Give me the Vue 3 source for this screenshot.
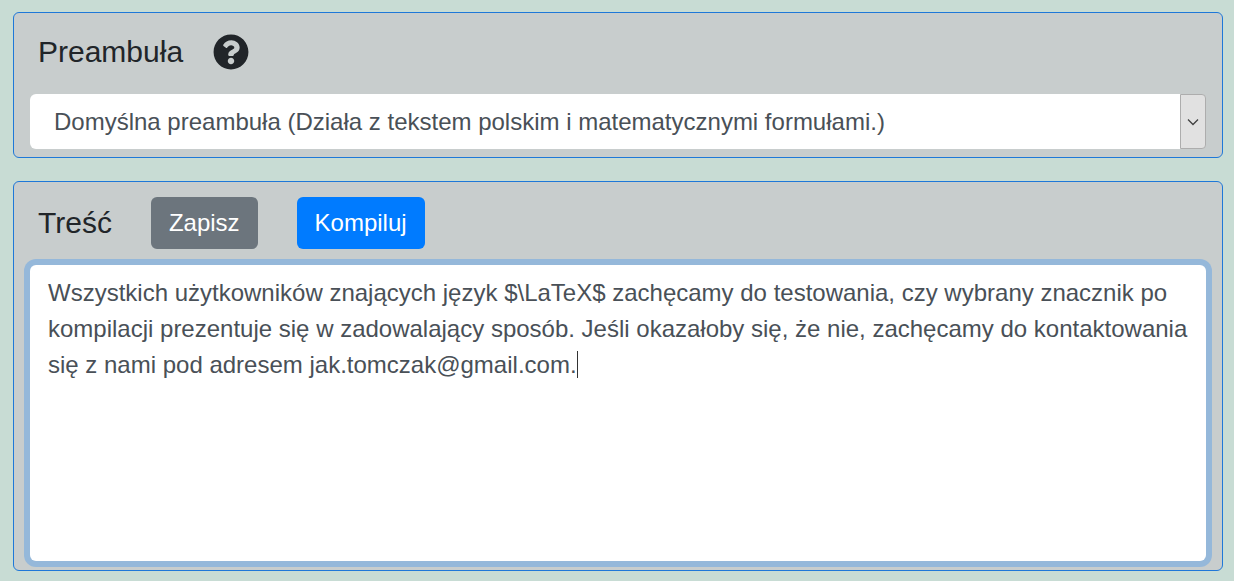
<script setup>
import { ref, onMounted } from 'vue'

const preamble = ref('default')
const content = ref(
  'Wszystkich użytkowników znających język $\\LaTeX$ zachęcamy do testowania, czy wybrany znacznik po kompilacji prezentuje się w zadowalający sposób. Jeśli okazałoby się, że nie, zachęcamy do kontaktowania się z nami pod adresem jak.tomczak@gmail.com.'
)
const editor = ref(null)

onMounted(() => {
  editor.value.focus()
  editor.value.setSelectionRange(content.value.length, content.value.length)
})
</script>

<template>
  <main class="page">
    <section class="card">
      <div class="card-head card-head-short">
        <label class="title" for="preamble">Preambuła</label>
        <button class="help" type="button" aria-label="Pomoc">
          <svg viewBox="0 0 512 512" aria-hidden="true">
            <path
              fill="currentColor"
              d="M504 256c0 136.997-111.043 248-248 248S8 392.997 8 256C8 119.083 119.043 8 256 8s248 111.083 248 248zM262.655 90c-54.497 0-89.255 22.957-116.549 63.758-3.536 5.286-2.353 12.415 2.715 16.258l34.699 26.31c5.205 3.947 12.621 3.008 16.665-2.122 17.864-22.658 30.113-35.797 57.303-35.797 20.429 0 45.698 13.148 45.698 32.958 0 14.976-12.363 22.667-32.534 33.976C247.128 238.528 216 254.941 216 296v4c0 6.627 5.373 12 12 12h56c6.627 0 12-5.373 12-12v-1.333c0-28.462 83.186-29.647 83.186-106.667 0-58.002-60.165-102-116.531-102zM256 338c-25.365 0-46 20.635-46 46 0 25.364 20.635 46 46 46s46-20.636 46-46c0-25.365-20.635-46-46-46z"
            />
          </svg>
        </button>
      </div>
      <div class="select-wrap">
        <select id="preamble" v-model="preamble" class="select">
          <option value="default">Domyślna preambuła (Działa z tekstem polskim i matematycznymi formułami.)</option>
        </select>
        <span class="arrow" aria-hidden="true">
          <svg viewBox="0 0 12 8"><path d="M1 1.5 6 6.5 11 1.5" fill="none" stroke="#404040" stroke-width="1.3" /></svg>
        </span>
      </div>
    </section>

    <section class="card">
      <div class="card-head">
        <label class="title" for="content">Treść</label>
        <button class="btn btn-save" type="button">Zapisz</button>
        <button class="btn btn-compile" type="button">Kompiluj</button>
      </div>
      <div class="editor-wrap">
        <textarea id="content" ref="editor" v-model="content" class="editor" rows="7" spellcheck="false"></textarea>
        <div class="caret-layer" aria-hidden="true">{{ content }}<span class="caret"></span></div>
      </div>
    </section>
  </main>
</template>

<style>
body {
  background: #c8dcd4;
}
</style>

<style scoped>
.page,
.page * {
  box-sizing: border-box;
}
.page {
  display: flex;
  flex-direction: column;
  gap: 23px;
  padding: 12px 11px 10px 13px;
  font-family: "Liberation Sans", Arial, sans-serif;
  font-size: 24px;
  line-height: 36px;
  color: #212529;
}
.card {
  border: 1px solid #1f78d8;
  border-radius: 6px;
  background: #c8cdcd;
  padding: 15px 16px 8px;
}
.card-head {
  display: flex;
  align-items: center;
  height: 52px;
  padding-left: 8px;
}
.card-head-short {
  height: 48px;
}
.title {
  font-size: 30px;
}
.help {
  width: 36px;
  height: 36px;
  margin-left: 30px;
  padding: 0;
  border: 0;
  background: none;
  color: #212529;
}
.help svg {
  display: block;
  width: 36px;
  height: 36px;
}
.select-wrap {
  position: relative;
  margin-top: 18px;
}
.select {
  display: block;
  width: 100%;
  height: 55px;
  padding: 0 40px 0 24px;
  border: 0;
  border-radius: 6px;
  background: #fff;
  appearance: none;
  font: inherit;
  color: #495057;
}
.arrow {
  position: absolute;
  top: 0;
  right: 0;
  bottom: 0;
  display: flex;
  align-items: center;
  justify-content: center;
  width: 26px;
  border: 1px solid #adadad;
  border-radius: 0 4px 4px 0;
  background: #e1e1e1;
  pointer-events: none;
}
.arrow svg {
  width: 12px;
  height: 8px;
}
.btn {
  height: 52px;
  margin-left: 39px;
  padding: 0 18px;
  border: 0;
  border-radius: 6px;
  font: inherit;
  color: #fff;
}
.btn-save {
  background: #6c757d;
}
.btn-compile {
  background: #007bff;
}
.editor-wrap {
  position: relative;
  margin: 16px 0 1px;
}
.editor,
.caret-layer {
  padding: 10px 18px;
  font: inherit;
  line-height: 36px;
}
.editor {
  display: block;
  width: 100%;
  height: 296px;
  border: 0;
  border-radius: 6px;
  outline: 0;
  resize: none;
  background: #fff;
  box-shadow: 0 0 0 6px #95b8da;
  color: #495057;
  caret-color: transparent;
}
.caret-layer {
  position: absolute;
  inset: 0;
  color: transparent;
  white-space: pre-wrap;
  overflow-wrap: break-word;
  pointer-events: none;
}
.caret {
  display: inline-block;
  width: 1px;
  height: 27px;
  background: #333;
  vertical-align: -5px;
}
</style>
